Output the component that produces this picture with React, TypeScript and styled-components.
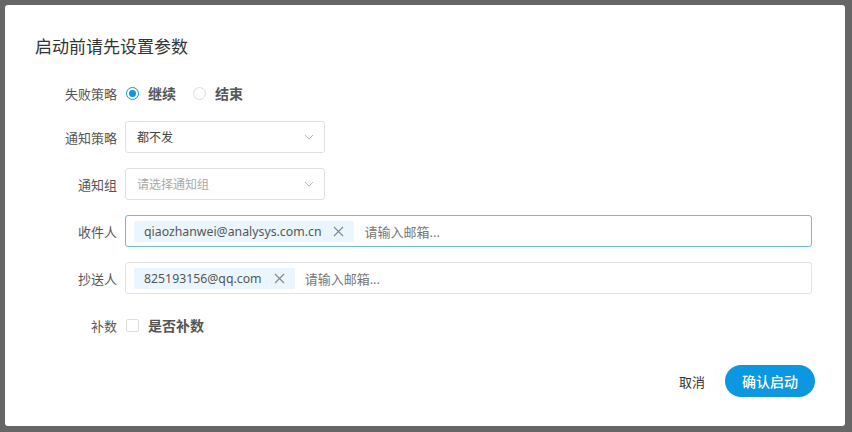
import React from 'react';
import styled, { createGlobalStyle } from 'styled-components';

const GlobalStyle = createGlobalStyle`
  html, body {
    margin: 0;
    padding: 0;
    background: #666;
    font-family: "Noto Sans", "Noto Sans CJK SC", sans-serif;
  }
  * { box-sizing: border-box; }
`;

const Page = styled.div`
  width: 852px;
  height: 432px;
  padding: 5px 7px 6px 5px;
`;

const Dialog = styled.div`
  width: 840px;
  height: 421px;
  background: #fff;
  border-radius: 3px;
  padding: 30px 30px 29px 30px;
  display: flex;
  flex-direction: column;
`;

const Title = styled.h2`
  margin: 0;
  font-size: 17px;
  font-weight: 400;
  line-height: 24px;
  color: #333;
`;

const Form = styled.div`
  margin-top: 21px;
  display: flex;
  flex-direction: column;
  gap: 15px;
  padding-right: 3px;
`;

const Row = styled.div<{ h?: number }>`
  display: flex;
  align-items: center;
  height: ${p => p.h || 32}px;
`;

const Label = styled.div`
  width: 90px;
  flex: none;
  text-align: right;
  padding-right: 8px;
  font-size: 13px;
  color: #555;
`;

const Options = styled.div`
  display: flex;
  align-items: center;
  gap: 16px;
`;

const Option = styled.label`
  display: flex;
  align-items: center;
  gap: 9px;
  font-size: 14px;
  font-weight: 600;
  color: #555;
`;

const Radio = styled.span<{ checked?: boolean }>`
  width: 13px;
  height: 13px;
  border-radius: 50%;
  border: 1px solid ${p => (p.checked ? '#0b98e0' : '#ddd')};
  display: inline-flex;
  align-items: center;
  justify-content: center;
  margin-left: 1px;
  &::after {
    content: '';
    width: 7px;
    height: 7px;
    border-radius: 50%;
    background: ${p => (p.checked ? '#0b98e0' : 'transparent')};
  }
`;

const Checkbox = styled.span`
  width: 13px;
  height: 13px;
  border: 1px solid #ddd;
  border-radius: 2px;
  margin-left: 1px;
`;

const Select = styled.div<{ placeholder?: boolean }>`
  width: 200px;
  height: 32px;
  border: 1px solid #e1e1e1;
  border-radius: 3px;
  padding: 0 10px 0 11px;
  display: flex;
  align-items: center;
  justify-content: space-between;
  font-size: 12px;
  color: ${p => (p.placeholder ? '#aaa' : '#444')};
`;

const TagInput = styled.div<{ focused?: boolean }>`
  flex: 1;
  height: 32px;
  border: 1px solid ${p => (p.focused ? '#69bde8' : '#e3e3e3')};
  border-radius: 3px;
  padding: 0 8px;
  display: flex;
  align-items: center;
  gap: 10px;
`;

const Tag = styled.span`
  height: 21px;
  background: #eaf5fd;
  border-radius: 2px;
  padding: 0 10px 0 10px;
  display: inline-flex;
  align-items: center;
  gap: 12px;
  font-size: 12.3px;
  color: #555;
`;

const Placeholder = styled.span`
  font-size: 13px;
  color: #777;
`;

const Footer = styled.div`
  margin-top: auto;
  display: flex;
  justify-content: flex-end;
  align-items: center;
  gap: 20px;
`;

const TextButton = styled.button`
  border: none;
  background: none;
  padding: 0;
  font-family: inherit;
  font-size: 13px;
  color: #333;
`;

const PrimaryButton = styled.button`
  width: 90px;
  height: 32px;
  border: none;
  border-radius: 16px;
  background: #0b98e0;
  color: #fff;
  font-family: inherit;
  font-size: 14px;
  font-weight: 500;
`;

const Chevron = () => (
  <svg width="10" height="6" viewBox="0 0 10 6" fill="none">
    <path d="M1 1l4 4 4-4" stroke="#bbb" strokeWidth="1" />
  </svg>
);

const Close = () => (
  <svg width="11" height="11" viewBox="0 0 11 11" fill="none">
    <path d="M1 1l9 9M10 1l-9 9" stroke="#7a8a99" strokeWidth="1.1" />
  </svg>
);

export default function App() {
  return (
    <Page>
      <GlobalStyle />
      <Dialog>
        <Title>启动前请先设置参数</Title>
        <Form>
          <Row h={26}>
            <Label>失败策略</Label>
            <Options>
              <Option><Radio checked />继续</Option>
              <Option><Radio />结束</Option>
            </Options>
          </Row>
          <Row>
            <Label>通知策略</Label>
            <Select>都不发<Chevron /></Select>
          </Row>
          <Row>
            <Label>通知组</Label>
            <Select placeholder>请选择通知组<Chevron /></Select>
          </Row>
          <Row>
            <Label>收件人</Label>
            <TagInput focused>
              <Tag>qiaozhanwei@analysys.com.cn<Close /></Tag>
              <Placeholder>请输入邮箱...</Placeholder>
            </TagInput>
          </Row>
          <Row>
            <Label>抄送人</Label>
            <TagInput>
              <Tag>825193156@qq.com<Close /></Tag>
              <Placeholder>请输入邮箱...</Placeholder>
            </TagInput>
          </Row>
          <Row>
            <Label>补数</Label>
            <Option><Checkbox />是否补数</Option>
          </Row>
        </Form>
        <Footer>
          <TextButton>取消</TextButton>
          <PrimaryButton>确认启动</PrimaryButton>
        </Footer>
      </Dialog>
    </Page>
  );
}
